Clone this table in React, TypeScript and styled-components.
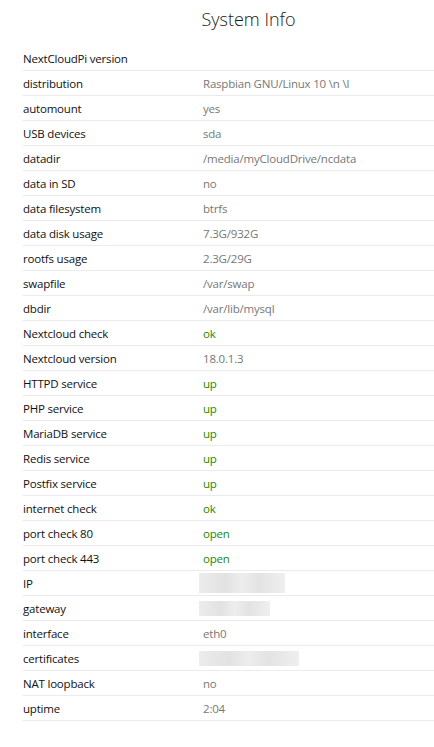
import React from "react";
import styled, { createGlobalStyle } from "styled-components";

const Global = createGlobalStyle`
  html, body { margin: 0; padding: 0; background: #fff; overflow: hidden; }
  body { font-family: "Open Sans", "Noto Sans", sans-serif; }
`;

const Page = styled.div`
  margin-left: 23px;
`;

const Title = styled.h1`
  margin: 0;
  height: 46px;
  box-sizing: border-box;
  padding: 6px 0 0 40px;
  text-align: center;
  font-size: 18px;
  font-weight: 300;
  color: #1a1a1a;
  line-height: 26px;
`;

const Table = styled.div`
  display: flex;
  flex-direction: column;
`;

const Row = styled.div`
  display: grid;
  grid-template-columns: 180px 1fr;
  align-items: center;
  height: 25px;
  box-sizing: border-box;
  border-bottom: 1px solid #ebebeb;
  font-size: 11.5px;
  letter-spacing: -0.2px;
`;

const Label = styled.div`
  color: #111;
`;

type Tone = "plain" | "good" | "hidden";

const Value = styled.div<{ $tone: Tone }>`
  color: ${(p) => (p.$tone === "good" ? "#1a8a00" : "#777")};
  display: flex;
  align-items: center;
`;

const Blur = styled.div<{ $w: number; $h: number }>`
  width: ${(p) => p.$w}px;
  height: ${(p) => p.$h}px;
  margin-left: -4px;
  background: linear-gradient(90deg, #ececec 0%, #e2e2e2 30%, #ededed 50%, #e3e3e3 70%, #efefef 100%);
`;

type Item = { k: string; v?: string; t?: Tone; blur?: [number, number] };

const rows: Item[] = [
  { k: "NextCloudPi version", v: "" },
  { k: "distribution", v: "Raspbian GNU/Linux 10 \\n \\l" },
  { k: "automount", v: "yes" },
  { k: "USB devices", v: "sda" },
  { k: "datadir", v: "/media/myCloudDrive/ncdata" },
  { k: "data in SD", v: "no" },
  { k: "data filesystem", v: "btrfs" },
  { k: "data disk usage", v: "7.3G/932G" },
  { k: "rootfs usage", v: "2.3G/29G" },
  { k: "swapfile", v: "/var/swap" },
  { k: "dbdir", v: "/var/lib/mysql" },
  { k: "Nextcloud check", v: "ok", t: "good" },
  { k: "Nextcloud version", v: "18.0.1.3" },
  { k: "HTTPD service", v: "up", t: "good" },
  { k: "PHP service", v: "up", t: "good" },
  { k: "MariaDB service", v: "up", t: "good" },
  { k: "Redis service", v: "up", t: "good" },
  { k: "Postfix service", v: "up", t: "good" },
  { k: "internet check", v: "ok", t: "good" },
  { k: "port check 80", v: "open", t: "good" },
  { k: "port check 443", v: "open", t: "good" },
  { k: "IP", t: "hidden", blur: [86, 20] },
  { k: "gateway", t: "hidden", blur: [71, 15] },
  { k: "interface", v: "eth0" },
  { k: "certificates", t: "hidden", blur: [100, 15] },
  { k: "NAT loopback", v: "no" },
  { k: "uptime", v: "2:04" },
];

export default function App() {
  return (
    <>
      <Global />
      <Page>
        <Title>System Info</Title>
        <Table>
          {rows.map((r) => (
            <Row key={r.k}>
              <Label>{r.k}</Label>
              <Value $tone={r.t ?? "plain"}>
                {r.blur ? <Blur $w={r.blur[0]} $h={r.blur[1]} /> : r.v}
              </Value>
            </Row>
          ))}
        </Table>
      </Page>
    </>
  );
}
